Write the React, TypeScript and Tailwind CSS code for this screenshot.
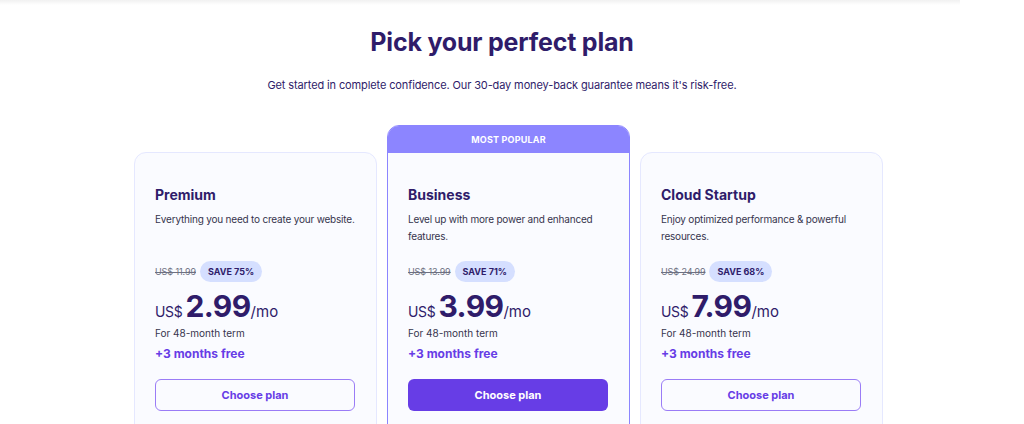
import React from "react";

type Plan = {
  name: string;
  desc: string;
  oldPrice: string;
  save: string;
  price: string;
  popular?: boolean;
};

const plans: Plan[] = [
  {
    name: "Premium",
    desc: "Everything you need to create your website.",
    oldPrice: "US$ 11.99",
    save: "SAVE 75%",
    price: "2.99",
  },
  {
    name: "Business",
    desc: "Level up with more power and enhanced features.",
    oldPrice: "US$ 13.99",
    save: "SAVE 71%",
    price: "3.99",
    popular: true,
  },
  {
    name: "Cloud Startup",
    desc: "Enjoy optimized performance & powerful resources.",
    oldPrice: "US$ 24.99",
    save: "SAVE 68%",
    price: "7.99",
  },
];

function PlanBody({ plan }: { plan: Plan }) {
  return (
    <div className="px-[20px] pt-[32px] pb-[24px]">
      <h3 className="text-[14px] leading-[20px] font-bold text-[#2f1c6a]">{plan.name}</h3>
      <p className="mt-[6px] min-h-[34px] text-[10px] leading-[17px] tracking-[-0.2px] text-[#36344d]">
        {plan.desc}
      </p>

      <div className="mt-[16px] flex h-[21px] items-center gap-[4px]">
        <span className="text-[9px] tracking-[-0.1px] text-[#6d7081] line-through">{plan.oldPrice}</span>
        <span className="rounded-full bg-[#d5dfff] px-[8px] py-[4px] text-[9px] font-bold leading-[13px] text-[#2f1c6a]">
          {plan.save}
        </span>
      </div>

      <div className="mt-[6px] flex items-baseline text-[#2f1c6a]">
        <span className="mr-[3px] text-[14px] tracking-[-0.3px]">US$</span>
        <span className="text-[30px] leading-[36px] font-bold tracking-[-0.6px]">{plan.price}</span>
        <span className="text-[15px]">/mo</span>
      </div>
      <p className="mt-[2px] text-[10px] leading-[14px] text-[#36344d]">For 48-month term</p>
      <p className="mt-[5px] text-[12px] leading-[18px] font-bold text-[#673de6]">+3 months free</p>

      {plan.popular ? (
        <button className="mt-[16px] flex h-[32px] w-[200px] items-center justify-center rounded-[6px] bg-[#673de6] text-[11px] font-bold text-white">
          Choose plan
        </button>
      ) : (
        <button className="mt-[16px] flex h-[32px] w-[200px] items-center justify-center rounded-[6px] border-[1.5px] border-[#9a7cf6] bg-transparent text-[11px] font-bold text-[#673de6]">
          Choose plan
        </button>
      )}
    </div>
  );
}

export default function App() {
  return (
    <div className="relative h-[424px] w-[1024px] overflow-hidden bg-white font-['Inter',sans-serif]">
      <div className="h-[5px] w-[960px] bg-gradient-to-b from-[#f1f1f1] to-white" />

      <div className="pr-[20px]">
        <h1 className="mt-[22px] text-center text-[25px] leading-[30px] font-bold tracking-[-0.2px] text-[#2f1c6a]">
          Pick your perfect plan
        </h1>
        <p className="mt-[20px] text-center text-[11px] leading-[16px] tracking-[-0.12px] text-[#2f1c6a]">
          Get started in complete confidence. Our 30-day money-back guarantee means it's risk-free.
        </p>
      </div>

      <div className="ml-[134px] mt-[32px] flex items-start gap-[10px]">
        {plans.map((plan) =>
          plan.popular ? (
            <div
              key={plan.name}
              className="w-[243px] overflow-hidden rounded-[12px] border-[1.5px] border-[#8c85ff] bg-[#fafbff]"
            >
              <div className="flex h-[27px] items-center justify-center bg-[#8c85ff] text-[9px] font-bold tracking-[0.2px] text-white">
                MOST POPULAR
              </div>
              <PlanBody plan={plan} />
            </div>
          ) : (
            <div
              key={plan.name}
              className="mt-[27px] w-[243px] rounded-[12px] border border-[#e5e8ff] bg-[#fafbff]"
            >
              <PlanBody plan={plan} />
            </div>
          )
        )}
      </div>
    </div>
  );
}
